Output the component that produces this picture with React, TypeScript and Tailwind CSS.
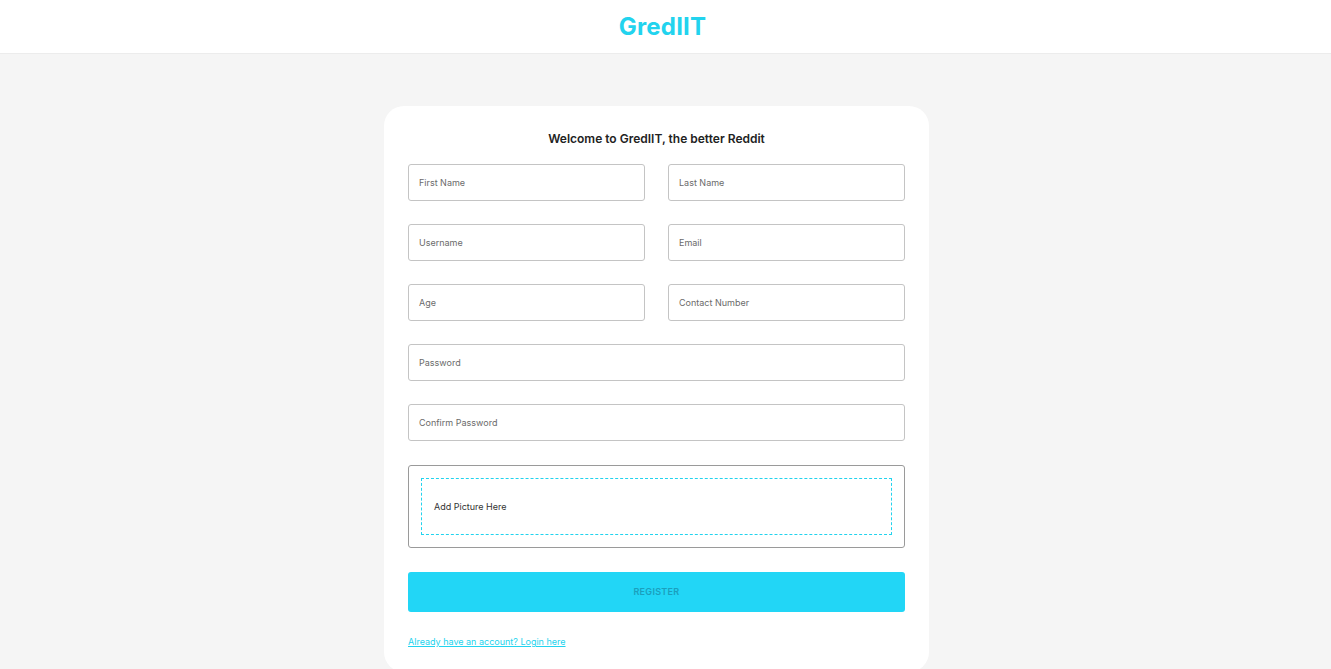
import React from 'react';

function Field({ label }: { label: string }) {
  return (
    <div className="flex h-[37px] items-center rounded-[3px] border border-[#c4c4c4] bg-white px-[10px]">
      <span className="text-[9px] text-[#6b6b6b]">{label}</span>
    </div>
  );
}

export default function App() {
  return (
    <div className="min-h-[669px] bg-[#f5f5f5] font-['Inter','Noto_Sans',sans-serif]">
      <header className="flex h-[54px] items-center justify-center border-b border-[#ececec] bg-white pr-[6px]">
        <h1 className="text-[24px] font-bold tracking-[0.2px] text-[#22d3ee]">GredIIT</h1>
      </header>

      <main className="flex justify-center pr-[18px] pt-[52px]">
        <div className="w-[545px] rounded-[20px] bg-white px-[24px] pb-[24px] pt-[25px]">
          <h2 className="text-center text-[12px] font-semibold leading-[16px] text-[#222]">
            Welcome to GredIIT, the better Reddit
          </h2>

          <div className="mt-[17px] grid grid-cols-2 gap-x-[23px] gap-y-[23px]">
            <Field label="First Name" />
            <Field label="Last Name" />
            <Field label="Username" />
            <Field label="Email" />
            <Field label="Age" />
            <Field label="Contact Number" />
            <div className="col-span-2">
              <Field label="Password" />
            </div>
            <div className="col-span-2">
              <Field label="Confirm Password" />
            </div>
          </div>

          <div className="mt-[24px] rounded-[3px] border border-[#9a9a9a] p-[12px]">
            <div className="flex h-[57px] items-center border border-dashed border-[#22d3ee] px-[12px]">
              <span className="text-[9px] text-[#333]">Add Picture Here</span>
            </div>
          </div>

          <button className="mt-[24px] flex h-[40px] w-full items-center justify-center rounded-[3px] bg-[#22d6f6]">
            <span className="text-[9px] font-semibold tracking-[0.3px] text-[#1b9fbd]">REGISTER</span>
          </button>

          <div className="mt-[21px] leading-[12px]">
            <a href="#" className="text-[9px] text-[#22d3ee] underline">
              Already have an account? Login here
            </a>
          </div>
        </div>
      </main>
    </div>
  );
}
